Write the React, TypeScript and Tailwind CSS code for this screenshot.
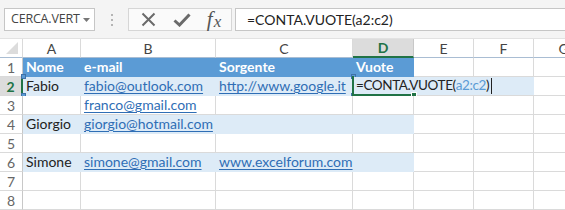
import React from "react";

const COLS = [
  { key: "A", w: 58 },
  { key: "B", w: 135 },
  { key: "C", w: 137 },
  { key: "D", w: 61 },
  { key: "E", w: 60 },
  { key: "F", w: 60 },
  { key: "G", w: 60 },
];

type CellDef = { text?: string; link?: boolean; bold?: boolean };
type RowDef = { n: number; fill: "head" | "band" | "none"; cells: CellDef[] };

const ROWS: RowDef[] = [
  { n: 1, fill: "head", cells: [{ text: "Nome" }, { text: "e-mail" }, { text: "Sorgente" }, { text: "Vuote" }] },
  { n: 2, fill: "band", cells: [{ text: "Fabio" }, { text: "fabio@outlook.com", link: true }, { text: "http://www.google.it", link: true }, {}] },
  { n: 3, fill: "none", cells: [{}, { text: "franco@gmail.com", link: true }, {}, {}] },
  { n: 4, fill: "band", cells: [{ text: "Giorgio" }, { text: "giorgio@hotmail.com", link: true }, {}, {}] },
  { n: 5, fill: "none", cells: [{}, {}, {}, {}] },
  { n: 6, fill: "band", cells: [{ text: "Simone" }, { text: "simone@gmail.com", link: true }, { text: "www.excelforum.com", link: true }, {}] },
  { n: 7, fill: "none", cells: [] },
  { n: 8, fill: "none", cells: [] },
];

function Corner({ className }: { className: string }) {
  return <div className={"absolute w-[5px] h-[5px] bg-[#5b9bd5] border border-[#3f72a8] " + className} />;
}

export default function App() {
  return (
    <div className="w-[565px] h-[210px] overflow-hidden bg-white font-['Lato','Liberation_Sans',sans-serif] text-[#222]">
      {/* formula bar */}
      <div className="h-[39px] bg-[#f4f4f4] flex items-start pt-[8px] pl-[4px] border-b border-[#e2e2e2]">
        <div className="w-[91px] h-[23px] bg-white border border-[#c6c6c6] flex items-center pl-[6px] pr-[4px] font-['Open_Sans',sans-serif] text-[12.5px] text-[#444] tracking-[-0.2px]">
          <span className="flex-1">CERCA.VERT</span>
          <svg width="7" height="4" viewBox="0 0 7 4"><path d="M0 0h7L3.5 4z" fill="#777" /></svg>
        </div>
        <div className="w-[33px] h-[23px] flex flex-col items-center justify-center gap-[3px]">
          <span className="w-[2px] h-[2px] bg-[#b4b4b4]" />
          <span className="w-[2px] h-[2px] bg-[#b4b4b4]" />
          <span className="w-[2px] h-[2px] bg-[#b4b4b4]" />
        </div>
        <div className="w-[104px] h-[23px] bg-[#fafafa] border border-[#d6d6d6] flex items-center">
          <div className="w-[38px] flex justify-center">
            <svg width="15" height="15" viewBox="0 0 15 15"><path d="M1.5 1.5L13.5 13.5M13.5 1.5L1.5 13.5" stroke="#6a6a6a" strokeWidth="2" /></svg>
          </div>
          <div className="w-[30px] flex justify-center">
            <svg width="18" height="14" viewBox="0 0 18 14"><path d="M1.5 7.5L6.5 12L16.5 1.5" stroke="#6a6a6a" strokeWidth="3" fill="none" /></svg>
          </div>
          <div className="w-[34px] flex justify-center items-end font-['Liberation_Serif',serif] italic text-[21px] text-[#555] leading-none">
            <span>f</span><span className="text-[17px] ml-[1px]">x</span>
          </div>
        </div>
        <div className="ml-[3px] flex-1 h-[23px] bg-white border border-r-0 border-[#c6c6c6] flex items-center pl-[11px] text-[14px] text-[#222]">
          =CONTA.VUOTE(a2:c2)
        </div>
      </div>

      {/* column headers */}
      <div className="h-[19px] flex">
        <div className="w-[23px] shrink-0 h-full border-r border-[#dadada] border-b border-b-[#a9bdd3] relative bg-white">
          <svg className="absolute right-[4px] bottom-[3px]" width="12" height="12" viewBox="0 0 12 12"><path d="M12 0V12H0z" fill="#dcdcdc" /></svg>
        </div>
        {COLS.map((c) =>
          c.key === "D" ? (
            <div key={c.key} style={{ width: c.w }} className="shrink-0 h-full bg-[#dcdcdc] border-r border-[#c8c8c8] border-b-2 border-b-[#217346] flex items-center justify-center text-[14px] font-bold text-[#217346]">
              D
            </div>
          ) : (
            <div key={c.key} style={{ width: c.w }} className="shrink-0 h-full bg-white border-r border-[#dadada] border-b border-b-[#a9bdd3] flex items-center justify-center text-[14px] text-[#444]">
              {c.key}
            </div>
          )
        )}
      </div>

      {/* rows */}
      {ROWS.map((r) => (
        <div key={r.n} className="h-[19px] flex relative">
          <div
            className={
              "w-[23px] shrink-0 h-full border-b border-[#dadada] flex items-center justify-center text-[14px] " +
              (r.n === 2
                ? "bg-[#dcdcdc] border-r-2 border-r-[#217346] text-[#217346] font-bold"
                : "bg-white border-r border-r-[#c8c8c8] text-[#666]")
            }
          >
            {r.n}
          </div>
          {COLS.map((c, i) => {
            const cell = r.cells[i] || {};
            const inTable = i < 4 && r.fill !== "none";
            const bg = !inTable ? "bg-white border-[#dadada]" : r.fill === "head" ? "bg-[#5b9bd5] border-transparent" : "bg-[#ddebf7] border-transparent";
            return (
              <div
                key={c.key}
                style={{ width: c.w }}
                className={"shrink-0 h-full border-r border-b flex items-end pl-[3px] pb-[1px] whitespace-nowrap overflow-visible text-[14px] leading-[17px] " + bg}
              >
                {cell.text ? (
                  r.fill === "head" ? (
                    <span className="font-bold text-white">{cell.text}</span>
                  ) : cell.link ? (
                    <span className="text-[#2f6eb5] underline underline-offset-[2px] decoration-[1px]">{cell.text}</span>
                  ) : (
                    <span className="text-[#222]">{cell.text}</span>
                  )
                ) : null}
              </div>
            );
          })}
          {r.n === 2 && (
            <>
              {/* range finder A2:C2 */}
              <Corner className="left-[21px] top-[-3px]" />
              <Corner className="left-[351px] top-[-3px]" />
              <Corner className="left-[21px] top-[16px]" />
              <Corner className="left-[351px] top-[16px]" />
              {/* in-cell editor */}
              <div className="absolute left-[354px] top-0 w-[180px] h-[18px] bg-[#ddebf7] flex items-end pl-[2px] pb-[1px] text-[13.5px] tracking-[-0.4px] leading-[17px] text-[#222] whitespace-nowrap">
                =CONTA.VUOTE(<span className="text-[#5b9bd5]">a2:c2</span>)<span className="inline-block w-[1px] h-[16px] bg-[#222] ml-[2px]" />
              </div>
              {/* active cell border */}
              <div className="absolute left-[352px] top-[-1px] w-[2px] h-[21px] bg-[#217346]" />
              <div className="absolute left-[352px] top-[17px] w-[62px] h-[2px] bg-[#217346]" />
              <div className="absolute left-[411px] top-[15px] w-[6px] h-[6px] bg-[#217346] border border-white" />
            </>
          )}
        </div>
      ))}
    </div>
  );
}
